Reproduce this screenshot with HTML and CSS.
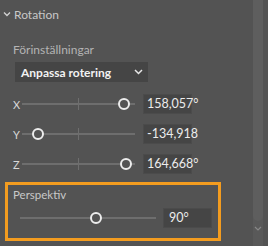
FILE: index.html
```html
<!DOCTYPE html>
<html>
  <head>
    <meta charset="UTF-8">
    <title>Rotation</title>
    <link rel="stylesheet" href="styles.css">
  </head>
  <body>
    <div class="panel">
      <div class="header">
        <svg class="chev" width="8" height="6" viewBox="0 0 8 6"><path d="M1 1.5 L4 4.5 L7 1.5" fill="none" stroke="#d0d0d0" stroke-width="1.4"/></svg>
        <span>Rotation</span>
      </div>

      <div class="label">Förinställningar</div>
      <div class="dropdown">
        <span>Anpassa rotering</span>
        <svg width="9" height="6" viewBox="0 0 9 6"><path d="M1 1 L4.5 4.5 L8 1" fill="none" stroke="#e8e8e8" stroke-width="1.5"/></svg>
      </div>

      <div class="row">
        <span class="axis">X</span>
        <div class="track"><i class="tick"></i><i class="knob" style="left: 96px"></i></div>
        <div class="value">158,057°</div>
      </div>
      <div class="row">
        <span class="axis">Y</span>
        <div class="track"><i class="tick"></i><i class="knob" style="left: 10px"></i></div>
        <div class="value">-134,918</div>
      </div>
      <div class="row">
        <span class="axis">Z</span>
        <div class="track"><i class="tick"></i><i class="knob" style="left: 98px"></i></div>
        <div class="value">164,668°</div>
      </div>

      <div class="highlight">
        <div class="label small">Perspektiv</div>
        <div class="row persp">
          <div class="track"><i class="knob" style="left: 70px"></i></div>
          <div class="value">90°</div>
        </div>
      </div>
    </div>

    <div class="scrollbar">
      <div class="thumb"></div>
      <svg width="8" height="5" viewBox="0 0 8 5"><path d="M1 1 L4 4 L7 1" fill="none" stroke="#888" stroke-width="1.2"/></svg>
    </div>
  </body>
</html>
```

FILE: styles.css
```css
body {
  margin: 0;
  width: 268px;
  height: 246px;
  background-color: #535353;
  font-family: Lato, "Noto Sans", sans-serif;
  font-size: 12px;
  color: #c4c4c4;
  display: flex;
  overflow: hidden;
}

.panel {
  flex: 1;
}

.header {
  height: 28px;
  display: flex;
  align-items: center;
  gap: 3px;
  padding-left: 3px;
  color: #c8c8c8;
  font-size: 12px;
}

.label {
  margin: 14px 0 0 13px;
  line-height: 16px;
  color: #b4b4b4;
  font-size: 12px;
}

.label.small {
  margin: 2px 0 0 5px;
  font-size: 11.5px;
  color: #c8c8c8;
}

.dropdown {
  margin: 4px 0 0 15px;
  width: 133px;
  height: 20px;
  box-sizing: border-box;
  background-color: #454545;
  display: flex;
  align-items: center;
  justify-content: space-between;
  padding: 0 5px 0 6px;
  color: #f2f2f2;
  font-weight: 700;
  font-size: 12px;
}

.row {
  height: 30px;
  display: flex;
  align-items: center;
  padding-left: 13px;
}

.dropdown + .row {
  margin-top: 7px;
}

.axis {
  width: 9px;
  color: #d8d8d8;
  font-size: 11px;
}

.track {
  position: relative;
  width: 113px;
  height: 2px;
  background-color: #6e6e6e;
}

.tick {
  position: absolute;
  left: 56px;
  top: -5px;
  width: 1px;
  height: 12px;
  background-color: #6e6e6e;
}

.knob {
  position: absolute;
  top: -5px;
  width: 8px;
  height: 8px;
  border: 2px solid #ececec;
  border-radius: 50%;
  background-color: #535353;
}

.value {
  margin-left: 8px;
  width: 49px;
  height: 20px;
  box-sizing: border-box;
  background-color: #454545;
  border: 1px solid #4b4b4b;
  color: #ececec;
  font-size: 12.5px;
  line-height: 18px;
  padding-left: 3px;
}

.highlight {
  margin: 3px 0 0 5px;
  width: 216px;
  height: 59px;
  box-sizing: border-box;
  border: 3px solid #f39c1f;
}

.row.persp {
  height: 30px;
  padding-left: 12px;
}

.persp .track {
  width: 136px;
}

.persp .value {
  margin-left: 7px;
  padding-left: 5px;
}

.scrollbar {
  width: 10px;
  margin-right: 5px;
  background-color: #595959;
  display: flex;
  flex-direction: column;
  align-items: center;
}

.thumb {
  width: 10px;
  height: 221px;
  background-color: #5e5e5e;
  border-radius: 0 0 5px 5px;
  margin-bottom: 5px;
}
```
